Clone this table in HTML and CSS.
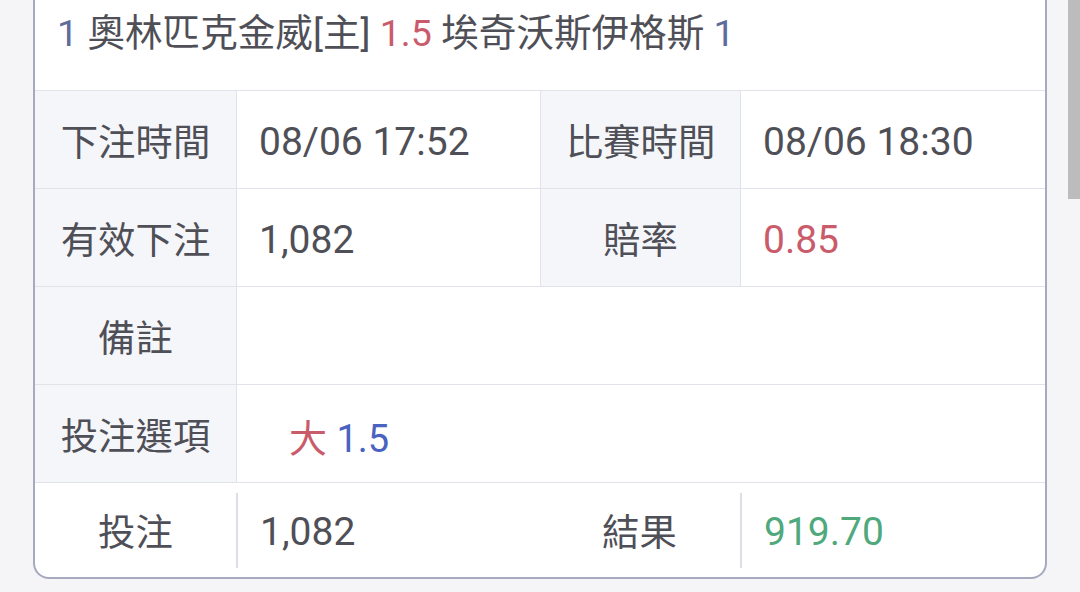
FILE: index.html
```html
<!DOCTYPE html>
<html lang="zh-Hant">
<head>
<meta charset="utf-8">
<link rel="stylesheet" href="styles.css">
</head>
<body>
<div class="page">
  <div class="card">
    <div class="title">
      <span class="blue">1</span> 奧林匹克金威[主] <span class="red">1.5</span> 埃奇沃斯伊格斯 <span class="blue">1</span>
    </div>
    <div class="grid">
      <div class="label">下注時間</div>
      <div class="value">08/06 17:52</div>
      <div class="label">比賽時間</div>
      <div class="value">08/06 18:30</div>

      <div class="label">有效下注</div>
      <div class="value">1,082</div>
      <div class="label">賠率</div>
      <div class="value red">0.85</div>

      <div class="label">備註</div>
      <div class="value wide"></div>

      <div class="label">投注選項</div>
      <div class="value wide"><span class="opt"><span class="red">大</span> <span class="bright">1.5</span></span></div>
    </div>
    <div class="foot">
      <div class="fcell flabel">投注</div>
      <div class="fcell fvalue sep">1,082</div>
      <div class="fcell flabel">結果</div>
      <div class="fcell fvalue sep green">919.70</div>
    </div>
  </div>
  <div class="scroll"></div>
</div>
</body>
</html>
```

FILE: styles.css
```css
html, body {
  margin: 0;
  padding: 0;
  background: #f5f5f7;
}
body {
  font-family: Roboto, "Noto Sans CJK TC", sans-serif;
  color: #4f4f57;
  width: 1080px;
  height: 592px;
  overflow: hidden;
}
.page {
  position: relative;
  width: 1080px;
  height: 592px;
  padding-left: 33px;
  box-sizing: border-box;
}
.card {
  width: 1014px;
  box-sizing: border-box;
  background: #fff;
  border: 2px solid #a7aabe;
  border-top: none;
  border-radius: 0 0 16px 16px;
  overflow: hidden;
}
.title {
  height: 90px;
  box-sizing: border-box;
  padding: 8px 0 0 22px;
  font-size: 37.6px;
  line-height: 50px;
  white-space: nowrap;
}
.blue { color: #5e6c9c; }
.red { color: #c95b6b; }
.bright { color: #4a63c0; }
.green { color: #4fa97c; }
.grid {
  display: grid;
  grid-template-columns: 201px 303px 199px 304px;
  grid-auto-rows: 97px;
  gap: 1px;
  background: #e2e3ea;
  border-top: 1px solid #e2e3ea;
  border-bottom: 1px solid #e2e3ea;
}
.label {
  background: #f5f6fa;
  display: flex;
  align-items: center;
  justify-content: center;
  font-size: 37.4px;
}
.value {
  background: #fff;
  display: flex;
  align-items: center;
  padding-left: 22px;
  padding-top: 4px;
  font-size: 39px;
}
.value.wide {
  grid-column: span 3;
}
.opt {
  margin-left: 30px;
  font-size: 38px;
}
.foot {
  display: grid;
  grid-template-columns: 201px 303px 201px 305px;
  height: 94px;
  align-items: center;
}
.fcell {
  height: 75px;
  display: flex;
  align-items: center;
  font-size: 37.4px;
}
.flabel {
  justify-content: center;
}
.fvalue {
  padding-left: 22px;
  padding-top: 4px;
  box-sizing: border-box;
  font-size: 39px;
}
.sep {
  border-left: 2px solid #dedfe5;
}
.scroll {
  position: absolute;
  top: 0;
  right: 0;
  width: 12px;
  height: 199px;
  background: #bcbcbc;
}
```
